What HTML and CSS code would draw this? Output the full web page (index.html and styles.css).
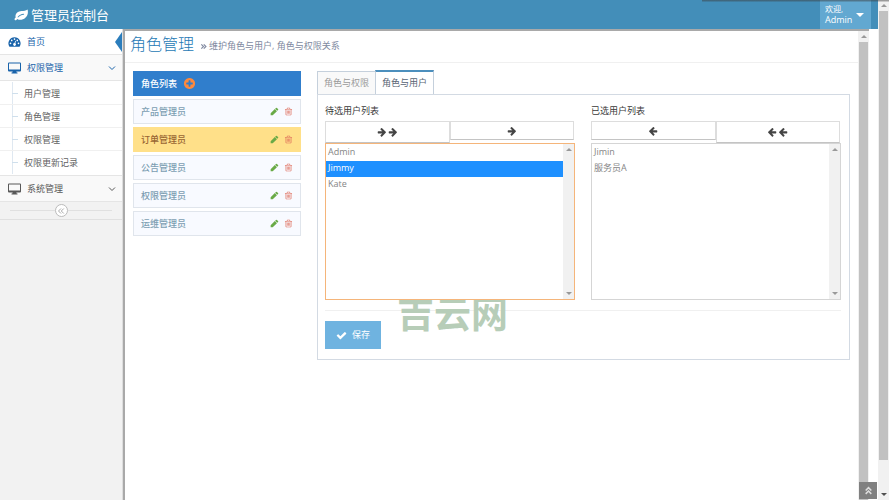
FILE: index.html
```html
<!DOCTYPE html>
<html lang="zh-CN">
<head>
  <meta charset="UTF-8">
  <meta name="viewport" content="width=device-width, initial-scale=1.0">
  <title>管理员控制台</title>
  <link rel="stylesheet" href="styles.css">
</head>
<body>

  <!-- 图标 -->
  <svg class="sprite">
    <symbol id="i-right" viewBox="0 0 1792 1792"><path d="M1600 960q0 54-37 91l-651 651q-39 37-91 37-51 0-90-37l-75-75q-38-38-38-91t38-91l293-293h-704q-52 0-84.500-37.500t-32.500-90.500v-128q0-53 32.500-90.500t84.500-37.500h704l-293-294q-38-36-38-90t38-90l75-75q38-38 90-38 53 0 91 38l651 651q37 35 37 90z"/></symbol>
    <symbol id="i-left" viewBox="0 0 1792 1792"><path d="M1664 896v128q0 53-32.500 90.500t-84.500 37.500h-704l293 294q38 36 38 90t-38 90l-75 76q-37 37-90 37-52 0-91-37l-651-652q-37-37-37-90 0-52 37-91l651-650q38-38 91-38 52 0 90 38l75 74q38 38 38 91t-38 91l-293 293h704q52 0 84.500 37.500t32.500 90.500z"/></symbol>
    <symbol id="i-pencil" viewBox="0 0 1792 1792"><path d="M960 416l416 416-832 832h-416v-416zm683 96q0 53-37 90l-166 166-416-416 166-165q36-38 90-38 53 0 91 38l235 234q37 39 37 91z"/></symbol>
    <symbol id="i-trash" viewBox="0 0 1792 1792"><path d="M704 736v576q0 14-9 23t-23 9h-64q-14 0-23-9t-9-23v-576q0-14 9-23t23-9h64q14 0 23 9t9 23zm256 0v576q0 14-9 23t-23 9h-64q-14 0-23-9t-9-23v-576q0-14 9-23t23-9h64q14 0 23 9t9 23zm256 0v576q0 14-9 23t-23 9h-64q-14 0-23-9t-9-23v-576q0-14 9-23t23-9h64q14 0 23 9t9 23zm128 724v-948h-896v948q0 22 7 40.500t14.500 27 10.500 8.500h832q3 0 10.500-8.500t14.500-27 7-40.500zm-672-1076h448l-48-117q-7-9-17-11h-317q-10 2-17 11zm928 32v64q0 14-9 23t-23 9h-96v948q0 83-47 143.500t-113 60.500h-832q-66 0-113-58.500t-47-141.500v-952h-96q-14 0-23-9t-9-23v-64q0-14 9-23t23-9h309l70-167q15-37 54-63t79-26h320q40 0 79 26t54 63l70 167h309q14 0 23 9t9 23z"/></symbol>
    <symbol id="i-check" viewBox="0 0 1792 1792"><path d="M1671 566q0 40-28 68l-724 724-136 136q-28 28-68 28t-68-28l-136-136-362-362q-28-28-28-68t28-68l136-136q28-28 68-28t68 28l294 295 656-657q28-28 68-28t68 28l136 136q28 28 28 68z"/></symbol>
    <symbol id="i-plus" viewBox="0 0 1792 1792"><path d="M1344 960v-128q0-26-19-45t-45-19h-256v-256q0-26-19-45t-45-19h-128q-26 0-45 19t-19 45v256h-256q-26 0-45 19t-19 45v128q0 26 19 45t45 19h256v256q0 26 19 45t45 19h128q26 0 45-19t19-45v-256h256q26 0 45-19t19-45zm320-64q0 209-103 385.500t-279.500 279.500-385.500 103-385.500-103-279.500-279.500-103-385.500 103-385.500 279.500-279.500 385.500-103 385.500 103 279.500 279.500 103 385.500z"/></symbol>
    <symbol id="i-leaf" viewBox="0 0 14 12"><path fill-rule="evenodd" d="M13.500.5C11.800 2 9.800 1.900 7.500 2 4 2.200 1.600 4.200 1.500 7.200c0 .6.100 1 .2 1.400C1 9.200.5 9.700.5 10.300c0 .5.500 1 1 1 .6 0 1.200-.9 1.700-1.400 1.200.7 2.700 1.100 4.300.8C11.700 10 14 6.200 13.900 3c0-1-.1-2-.4-2.500zM9.700 4.800c-2.700.1-4.300 1.300-5.900 2.900-.4.400.2 1 .6.600 1.600-1.500 3-2.500 5.300-2.600.6 0 .6-.9 0-.9z"/></symbol>
    <symbol id="i-dash" viewBox="0 0 14 12"><path fill-rule="evenodd" d="M7 1a6.500 6.500 0 0 0-5.500 10h11A6.500 6.500 0 0 0 7 1zM2.700 6.500a.9.900 0 1 1 0 1.800.9.900 0 0 1 0-1.800zM4 3.400a.9.900 0 1 1 0 1.800.9.900 0 0 1 0-1.800zM7 2a.9.900 0 1 1 0 1.800A.9.900 0 0 1 7 2zm3 1.400a.9.900 0 1 1 0 1.800.9.900 0 0 1 0-1.800zm1.300 3.100a.9.900 0 1 1 0 1.800.9.900 0 0 1 0-1.800zM7.700 4.700l.8.200-.6 2.500c.6.400.8 1 .6 1.600a1.500 1.500 0 1 1-1.400-1.800z"/></symbol>
    <symbol id="i-desktop" viewBox="0 0 13 12"><path fill-rule="evenodd" d="M1 .5h11a1 1 0 0 1 1 1v7a1 1 0 0 1-1 1H8.300l.4 1.100h.8v.9h-6v-.9h.8l.4-1.100H1a1 1 0 0 1-1-1v-7a1 1 0 0 1 1-1zm0 1v6h11v-6z"/></symbol>
    <symbol id="i-down" viewBox="0 0 8 8"><path d="M1 2.500l3 3 3-3" fill="none" stroke="currentColor"/></symbol>
    <symbol id="i-dbl-left" viewBox="0 0 8 8"><path d="M4 1.500L1.500 4 4 6.500M6.800 1.500L4.300 4l2.500 2.500" fill="none" stroke="currentColor"/></symbol>
    <symbol id="i-dbl-right" viewBox="0 0 8 8"><path d="M1.500 1.500L4 4 1.500 6.500M4.300 1.500L6.800 4 4.300 6.500" fill="none" stroke="currentColor" stroke-width="1.300"/></symbol>
    <symbol id="i-dbl-up" viewBox="0 0 8 8"><path d="M1.500 4L4 1.500 6.500 4M1.500 7L4 4.500 6.500 7" fill="none" stroke="currentColor" stroke-width="1.400"/></symbol>
  </svg>

  <div class="page">
    <!-- 顶部导航 -->
    <header class="navbar">
      <a class="brand" href="#"><svg class="leaf"><use href="#i-leaf"/></svg>管理员控制台</a>
      <button class="user">
        <span class="user-info"><small>欢迎,</small><span>Admin</span></span>
        <i class="caret"></i>
      </button>
    </header>

    <div class="container">
      <!-- 左侧菜单 -->
      <nav class="sidebar">
        <a class="menu-item current" href="#"><svg><use href="#i-dash"/></svg><span>首页</span></a>
        <a class="menu-item open" href="#"><svg><use href="#i-desktop"/></svg><span>权限管理</span><svg class="arrow"><use href="#i-down"/></svg></a>
        <ul class="submenu">
          <li><a href="#">用户管理</a></li>
          <li><a href="#">角色管理</a></li>
          <li><a href="#">权限管理</a></li>
          <li><a href="#">权限更新记录</a></li>
        </ul>
        <a class="menu-item" href="#"><svg><use href="#i-desktop"/></svg><span>系统管理</span><svg class="arrow"><use href="#i-down"/></svg></a>
        <div class="collapse">
          <button aria-label="收起菜单"><svg><use href="#i-dbl-left"/></svg></button>
        </div>
      </nav>

      <div class="frame">
        <main class="main">
          <div class="page-header">
            <h1>角色管理</h1>
            <small><svg><use href="#i-dbl-right"/></svg>维护角色与用户, 角色与权限关系</small>
          </div>

          <div class="content">
            <!-- 角色列表 -->
            <section class="roles">
              <div class="roles-title">角色列表<button aria-label="新增角色"><svg><use href="#i-plus"/></svg></button></div>
              <div class="role"><a href="#">产品管理员</a><button class="edit" aria-label="编辑"><svg><use href="#i-pencil"/></svg></button><button class="del" aria-label="删除"><svg><use href="#i-trash"/></svg></button></div>
              <div class="role selected"><a href="#">订单管理员</a><button class="edit" aria-label="编辑"><svg><use href="#i-pencil"/></svg></button><button class="del" aria-label="删除"><svg><use href="#i-trash"/></svg></button></div>
              <div class="role"><a href="#">公告管理员</a><button class="edit" aria-label="编辑"><svg><use href="#i-pencil"/></svg></button><button class="del" aria-label="删除"><svg><use href="#i-trash"/></svg></button></div>
              <div class="role"><a href="#">权限管理员</a><button class="edit" aria-label="编辑"><svg><use href="#i-pencil"/></svg></button><button class="del" aria-label="删除"><svg><use href="#i-trash"/></svg></button></div>
              <div class="role"><a href="#">运维管理员</a><button class="edit" aria-label="编辑"><svg><use href="#i-pencil"/></svg></button><button class="del" aria-label="删除"><svg><use href="#i-trash"/></svg></button></div>
            </section>

            <section class="tabs-box">
              <div class="tabs">
                <a class="tab" href="#">角色与权限</a>
                <a class="tab active" href="#">角色与用户</a>
              </div>
              <div class="tab-content">
                <div class="duallist">
                  <div class="col">
                    <label for="waiting">待选用户列表</label>
                    <div class="moves">
                      <button class="all" aria-label="全部添加"><svg><use href="#i-right"/></svg><svg><use href="#i-right"/></svg></button>
                      <button aria-label="添加"><svg><use href="#i-right"/></svg></button>
                    </div>
                    <div class="listbox focus">
                      <select id="waiting" multiple>
                        <option>Admin</option>
                        <option selected>Jimmy</option>
                        <option>Kate</option>
                      </select>
                      <div class="scroll"><i class="up"></i><i class="down"></i></div>
                    </div>
                  </div>
                  <div class="col">
                    <label for="chosen">已选用户列表</label>
                    <div class="moves">
                      <button aria-label="移除"><svg><use href="#i-left"/></svg></button>
                      <button class="all" aria-label="全部移除"><svg><use href="#i-left"/></svg><svg><use href="#i-left"/></svg></button>
                    </div>
                    <div class="listbox">
                      <select id="chosen" multiple>
                        <option>Jimin</option>
                        <option>服务员A</option>
                      </select>
                      <div class="scroll"><i class="up"></i><i class="down"></i></div>
                    </div>
                  </div>
                </div>
                <hr>
                <button class="save"><svg><use href="#i-check"/></svg>保存</button>
                <div class="watermark">吉云网</div>
              </div>
            </section>
          </div>
        </main>
        <div class="scroll"><i class="up"></i><div class="thumb"></div></div>
      </div>
    </div>
    <button class="go-top" aria-label="回到顶部"><svg><use href="#i-dbl-up"/></svg></button>
  </div>

  <div class="scroll page-scroll"><i class="up"></i><div class="thumb"></div><i class="down"></i></div>
  <div class="top-shadow"></div>

</body>
</html>
```
FILE: styles.css
```css
* {
  box-sizing: border-box;
  margin: 0;
  padding: 0;
}
body {
  display: flex;
  height: 100vh;
  overflow: hidden;
  background: #fff;
  color: #393939;
  font: 9px/16px "Open Sans", "Noto Sans CJK SC", sans-serif;
}
a { color: inherit; text-decoration: none; }
button, select { font: inherit; color: inherit; border: none; background: none; }
button { cursor: pointer; }
svg { display: block; fill: currentColor; flex: none; width: 9px; height: 9px; }
.sprite { position: absolute; width: 0; height: 0; }

.page { flex: 1; min-width: 0; display: flex; flex-direction: column; position: relative; }

/* 导航栏 */
.navbar { display: flex; justify-content: space-between; height: 29px; padding: 0 7px 0 14px; background: #438eb9; color: #fff; }
.brand { display: flex; align-items: center; gap: 3px; font-size: 13px; }
.leaf { width: 14px; height: 12px; }
.user { display: flex; align-items: center; gap: 4px; width: 51px; padding-left: 5px; background: #62a8d1; text-align: left; }
.user-info { display: flex; flex-direction: column; padding-bottom: 2px; line-height: 11px; }
.user small { font-size: 8px; line-height: 11px; }
.caret { border: 4px solid transparent; border-top-color: #fff; border-bottom: none; }

.container { flex: 1; display: flex; min-height: 0; }

/* 侧边栏 */
.sidebar { width: 123px; background: #f2f2f2; border-right: 1px solid #ddd; }
.menu-item { display: flex; align-items: center; gap: 6px; height: 26px; padding: 0 6px 0 8px; background: #f9f9f9; border-bottom: 1px solid #e5e5e5; color: #585858; }
.menu-item svg { width: 13px; height: 12px; }
.menu-item span { flex: 1; }
.menu-item .arrow { width: 8px; height: 8px; }
.menu-item.current { position: relative; background: #fff; color: #1963aa; }
.menu-item.current::after { content: ""; position: absolute; right: 0; top: 3px; border: 10px solid transparent; border-width: 10px 7px 10px 0; border-right-color: #2b7dbc; }
.menu-item.open { color: #1963aa; }
.submenu { list-style: none; padding-bottom: 2px; background: #fff; border-bottom: 1px solid #e5e5e5; }
.submenu li { position: relative; height: 23px; padding-left: 24px; line-height: 23px; color: #616161; border-top: 1px solid #f0f0f0; }
.submenu li:first-child { border-top-color: #fff; }
.submenu li::before { content: ""; position: absolute; left: 12px; top: 0; width: 1px; height: 23px; background: #dfe8f1; }
.submenu li::after { content: ""; position: absolute; left: 12px; top: 11px; width: 6px; height: 1px; background: #cfdfec; }
.collapse { display: flex; align-items: center; height: 18px; padding: 0 10px; border-bottom: 1px solid #e0e0e0; }
.collapse::before, .collapse::after { content: ""; flex: 1; height: 1px; background: #e0e0e0; }
.collapse button { display: grid; place-items: center; width: 13px; height: 13px; border: 1px solid #bbb; border-radius: 50%; background: #fff; color: #aaa; }
.collapse svg { width: 8px; height: 8px; }

/* 内容框架 */
.frame { flex: 1; display: flex; min-width: 0; margin-right: 9px; border: solid #a9a9a9; border-width: 2px 0 0 2px; }
.main { flex: 1; min-width: 0; }
.page-header { display: flex; align-items: center; gap: 6px; height: 32px; padding: 0 0 5px 5px; border-bottom: 1px solid #f0f0f0; }
h1 { font-size: 16px; font-weight: 300; line-height: 24px; color: #2679b5; }
.page-header small { display: flex; align-items: center; gap: 2px; padding-top: 4px; font-size: 9px; color: #8089a0; }
.page-header svg { width: 7px; height: 7px; }
.content { display: grid; grid-template-columns: 168px 1fr; gap: 16px; padding: 8px 8px 0; }

/* 角色列表 */
.roles { display: flex; flex-direction: column; gap: 3px; }
.roles-title, .role { display: flex; align-items: center; height: 25px; padding: 0 7px; border: 1px solid #e0e5ec; }
.roles-title { gap: 6px; background: #307ecc; border-color: #307ecc; color: #fff; font-weight: 500; }
.roles-title button { color: #ff893c; }
.roles-title svg { width: 13px; height: 13px; }
.role { gap: 5px; background: #f8faff; color: #7c9eb2; font-weight: 500; }
.role a { flex: 1; }
.role.selected { background: #ffe089; border-color: #ffe089; color: #963; }
.edit { color: #69aa46; }
.del { color: #dd6a58; }

/* 标签页 */
.tabs { display: flex; }
.tab { height: 23px; padding: 0 6px; border: 1px solid #c5d0dc; border-right: none; border-bottom: none; background: #f9f9f9; color: #999; line-height: 22px; }
.tab.active { position: relative; height: 25px; margin: -1px 0 -1px; border-right: 1px solid #c5d0dc; border-top: 2px solid #4c8fbd; background: #fff; color: #576373; }
.tab-content { position: relative; padding: 8px 8px 10px 7px; border: 1px solid #d3dae3; }
.duallist { display: flex; gap: 16px; }
.col { flex: 1; min-width: 0; }
.col label { display: block; height: 18px; }
.moves { display: flex; align-items: flex-start; height: 22px; padding-right: 1px; }
.moves button { flex: 1; display: flex; align-items: center; justify-content: center; height: 19px; border: 1px solid #ddd; border-bottom: 1px solid #c4c4c4; background: #fff; color: #444; }
.moves .all { gap: 1px; height: 22px; }
.moves svg { width: 10px; height: 10px; }
/* 列表盖住水印的上沿 */
.listbox { position: relative; z-index: 1; display: flex; height: 157px; border: 1px solid #d5d5d5; background: #fff; }
.listbox.focus { border-color: #f5b57a; }
select { flex: 1; min-width: 0; height: 100%; padding-top: 1px; overflow: hidden; scrollbar-width: none; outline: none; color: #858585; }
option { height: 16px; min-height: 16px; padding: 0 2px; line-height: 16px; }
option:checked { background: #1e90ff linear-gradient(#1e90ff, #1e90ff); -webkit-text-fill-color: #fff; }
hr { margin: 10px 0; border: none; border-top: 1px solid #f0f0f0; }
.save { display: flex; align-items: center; justify-content: center; gap: 5px; width: 56px; height: 28px; background: #6fb3e0; color: #fff; }
.save svg { width: 11px; height: 11px; }
.watermark { position: absolute; left: 79px; top: 199px; font-size: 37px; font-weight: 700; line-height: 40px; color: #b7cdb8; pointer-events: none; }

/* 滚动条 */
.scroll { display: flex; flex-direction: column; align-items: center; justify-content: space-between; width: 11px; background: #f1f1f1; }
.scroll .up, .scroll .down { border: 3px solid transparent; }
.scroll .up { margin: 4px 0; border-top: none; border-bottom-color: #999; }
.scroll .down { margin: 4px 0; border-bottom: none; border-top-color: #999; }
.scroll .thumb { flex: 1; width: 9px; background: #c1c1c1; }
.page-scroll .thumb { margin-bottom: 29px; }
.page-scroll .down { border-top-color: #505050; }

.go-top { position: absolute; right: 1px; bottom: 1px; display: grid; place-items: center; width: 18px; height: 17px; background: #808080; color: #ddd; }
.top-shadow { position: absolute; top: 0; right: 0; left: 79%; height: 2px; background: linear-gradient(rgba(60, 60, 60, .6), rgba(60, 60, 60, .1)); }
```
